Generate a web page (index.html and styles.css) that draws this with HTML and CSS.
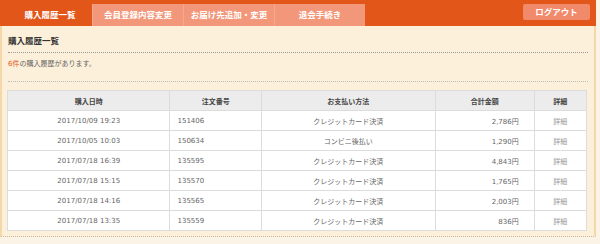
FILE: index.html
```html
<!DOCTYPE html>
<html lang="ja">
<head>
  <meta charset="UTF-8">
  <title>購入履歴一覧</title>
  <link rel="stylesheet" href="styles.css">
</head>
<body>
  <div class="wrap">
    <div class="header">
      <ul class="tabs">
        <li class="tab active">購入履歴一覧</li>
        <li class="tab">会員登録内容変更</li>
        <li class="tab">お届け先追加・変更</li>
        <li class="tab">退会手続き</li>
      </ul>
      <a class="logout">ログアウト</a>
    </div>

    <div class="panel">
      <h2 class="title">購入履歴一覧</h2>
      <p class="count"><span class="num">6件</span>の購入履歴があります。</p>

      <table class="history">
        <thead>
          <tr>
            <th class="c-date">購入日時</th>
            <th class="c-no">注文番号</th>
            <th class="c-pay">お支払い方法</th>
            <th class="c-sum">合計金額</th>
            <th class="c-det">詳細</th>
          </tr>
        </thead>
        <tbody>
          <tr><td class="c-date">2017/10/09 19:23</td><td class="c-no">151406</td><td class="c-pay">クレジットカード決済</td><td class="c-sum">2,786円</td><td class="c-det">詳細</td></tr>
          <tr><td class="c-date">2017/10/05 10:03</td><td class="c-no">150634</td><td class="c-pay">コンビニ後払い</td><td class="c-sum">1,290円</td><td class="c-det">詳細</td></tr>
          <tr><td class="c-date">2017/07/18 16:39</td><td class="c-no">135595</td><td class="c-pay">クレジットカード決済</td><td class="c-sum">4,843円</td><td class="c-det">詳細</td></tr>
          <tr><td class="c-date">2017/07/18 15:15</td><td class="c-no">135570</td><td class="c-pay">クレジットカード決済</td><td class="c-sum">1,765円</td><td class="c-det">詳細</td></tr>
          <tr><td class="c-date">2017/07/18 14:16</td><td class="c-no">135565</td><td class="c-pay">クレジットカード決済</td><td class="c-sum">2,003円</td><td class="c-det">詳細</td></tr>
          <tr><td class="c-date">2017/07/18 13:35</td><td class="c-no">135559</td><td class="c-pay">クレジットカード決済</td><td class="c-sum">836円</td><td class="c-det">詳細</td></tr>
        </tbody>
      </table>
    </div>
  </div>
</body>
</html>
```

FILE: styles.css
```css
/* styles.css */
body {
  margin: 0;
  background-color: #fbf3e6;
  font-family: "DejaVu Sans", "Noto Sans CJK JP", sans-serif;
  color: #555;
}

.wrap {
  width: 596px;
}

/* Header */
.header {
  height: 26px;
  background-color: #e2561a;
  display: flex;
  justify-content: space-between;
  align-items: flex-start;
  padding: 0 6px 0 8px;
  box-sizing: border-box;
}

.tabs {
  list-style: none;
  margin: 4px 0 0;
  padding: 0;
  display: flex;
}

.tab {
  width: 90px;
  height: 22px;
  line-height: 22px;
  text-align: center;
  color: #fff;
  font-size: 8.5px;
  font-weight: bold;
  background-color: #f2977a;
  border-left: 1px solid #f5a88e;
}

.tab.active {
  width: 84px;
  background-color: #e2561a;
  border-left: none;
}

.logout {
  margin-top: 4px;
  width: 67px;
  height: 16px;
  line-height: 16px;
  text-align: center;
  color: #fff;
  font-size: 8.5px;
  font-weight: bold;
  background-color: #f08a6a;
  border-radius: 2px;
}

/* Panel */
.panel {
  background-color: #fdf0da;
  border-left: 2px solid #f4d8a8;
  border-right: 2px solid #f4d8a8;
  padding: 9px 6px 5px 5px;
  border-bottom: 1px dotted #c9b9a0;
}

.title {
  margin: 0 0 0 1px;
  font-size: 8.5px;
  line-height: 12px;
  color: #333;
  padding-bottom: 5px;
  border-bottom: 1px dotted #999;
}

.count {
  margin: 5px 0 0 1px;
  font-size: 7px;
  line-height: 12px;
  color: #666;
  padding-bottom: 11px;
  border-bottom: 1px dotted #bbb;
}

.count .num {
  color: #e2561a;
}

/* Table */
.history {
  margin-top: 8px;
  width: 580px;
  border-collapse: collapse;
  background-color: #fff;
  font-size: 7px;
  color: #666;
}

.history th,
.history td {
  height: 19px;
  padding: 0;
  border: 1px solid #dcdcdc;
  text-align: center;
}

.history th {
  background-color: #ececec;
  color: #444;
  font-weight: bold;
}

.c-date { width: 169px; }
.c-no { width: 87px; }
.c-pay { width: 183px; }
.c-sum { width: 87px; }
.c-det { width: 54px; }

.history td.c-no {
  text-align: left;
  padding-left: 7px;
}

.history td.c-sum {
  text-align: right;
  padding-right: 15px;
}

.history td.c-det {
  color: #999;
}
```
